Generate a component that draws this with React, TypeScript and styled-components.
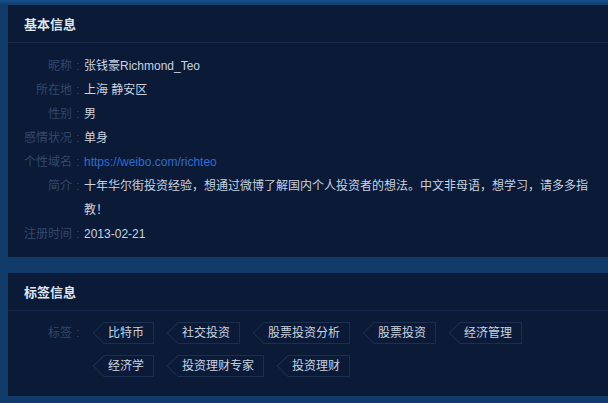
import React from "react";
import styled, { createGlobalStyle } from "styled-components";

const Global = createGlobalStyle`
  html, body { margin: 0; padding: 0; background: #0f3a6a; }
  body {
    font-family: "Liberation Sans", "Noto Sans CJK SC", sans-serif;
    font-size: 12px;
    overflow: hidden;
  }
`;

const Page = styled.div`
  min-height: 403px;
  padding: 5px 0 0 8px;
  box-sizing: border-box;
  background: linear-gradient(#17508e 0, #0f3a6a 5px, #0f3a6a 100%);
  display: flex;
  flex-direction: column;
  gap: 16px;
`;

const Card = styled.section`
  background: #0a1a37;
`;

const CardHeader = styled.div`
  height: 37px;
  border-bottom: 1px solid #13284b;
  padding: 0 16px;
  display: flex;
  align-items: center;
  color: #dfe5ee;
  font-size: 13px;
  font-weight: bold;
`;

const CardBody = styled.div<{ $pb: number }>`
  padding: 11px 16px ${(p) => p.$pb}px 16px;
`;

const Row = styled.div`
  display: flex;
  line-height: 24px;
`;

const Label = styled.div`
  flex: 0 0 60px;
  display: flex;
  justify-content: flex-end;
  color: #33486a;
  white-space: nowrap;
`;

const Colon = styled.span`
  display: inline-block;
  width: 12px;
  text-align: center;
`;

const Value = styled.div`
  flex: 1;
  color: #c9d3e0;
  word-break: break-all;
`;

const Link = styled.a`
  color: #2d6ed0;
  text-decoration: none;
`;

const TagRow = styled.div`
  display: flex;
  align-items: flex-start;
`;

const TagLabel = styled(Label)`
  line-height: 22px;
`;

const TagList = styled.div`
  flex: 1;
  display: flex;
  flex-wrap: wrap;
  column-gap: 24px;
  row-gap: 11px;
  padding-left: 20px;
`;

const Tag = styled.span`
  position: relative;
  height: 22px;
  line-height: 20px;
  box-sizing: border-box;
  padding: 0 9px 0 4px;
  border: 1px solid #1a2e4e;
  border-left: none;
  color: #c9d3e0;
  background: #0a1a37;
  &::before {
    content: "";
    position: absolute;
    left: -8px;
    top: 2px;
    width: 15px;
    height: 15px;
    border-left: 1px solid #1a2e4e;
    border-bottom: 1px solid #1a2e4e;
    transform: rotate(45deg);
    z-index: 0;
  }
  span {
    position: relative;
    z-index: 1;
  }
`;

const info: { label: string; value: React.ReactNode }[] = [
  { label: "昵称", value: "张钱豪Richmond_Teo" },
  { label: "所在地", value: "上海 静安区" },
  { label: "性别", value: "男" },
  { label: "感情状况", value: "单身" },
  { label: "个性域名", value: <Link href="#">https://weibo.com/richteo</Link> },
  {
    label: "简介",
    value:
      "十年华尔街投资经验，想通过微博了解国内个人投资者的想法。中文非母语，想学习，请多多指教！",
  },
  { label: "注册时间", value: "2013-02-21" },
];

const tags = ["比特币", "社交投资", "股票投资分析", "股票投资", "经济管理", "经济学", "投资理财专家", "投资理财"];

export default function App() {
  return (
    <>
      <Global />
      <Page>
        <Card>
          <CardHeader>基本信息</CardHeader>
          <CardBody $pb={11}>
            {info.map((r) => (
              <Row key={r.label}>
                <Label>
                  {r.label}
                  <Colon>:</Colon>
                </Label>
                <Value>{r.value}</Value>
              </Row>
            ))}
          </CardBody>
        </Card>
        <Card>
          <CardHeader>标签信息</CardHeader>
          <CardBody $pb={19}>
            <TagRow>
              <TagLabel>
                标签<Colon>:</Colon>
              </TagLabel>
              <TagList>
                {tags.map((t) => (
                  <Tag key={t}>
                    <span>{t}</span>
                  </Tag>
                ))}
              </TagList>
            </TagRow>
          </CardBody>
        </Card>
      </Page>
    </>
  );
}
